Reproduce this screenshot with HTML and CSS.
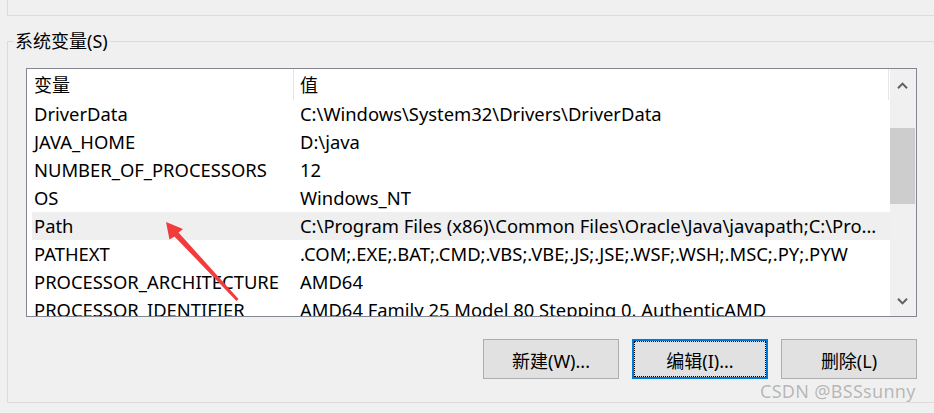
FILE: index.html
```html
<!DOCTYPE html>
<html lang="zh-CN">
<head>
<meta charset="utf-8">
<title>系统变量</title>
<link rel="stylesheet" href="styles.css">
</head>
<body>
  <div class="top-group"></div>
  <fieldset class="sys-group">
    <legend class="sys-legend">系统变量(S)</legend>
    <div class="sys-body">
      <div class="listbox">
        <div class="list-main">
          <div class="list-header">
            <div class="hcell hcell-name">变量</div>
            <div class="hcell hcell-value">值</div>
          </div>
          <div class="row"><div class="cell">DriverData</div><div class="cell cell-value">C:\Windows\System32\Drivers\DriverData</div></div>
          <div class="row"><div class="cell">JAVA_HOME</div><div class="cell cell-value">D:\java</div></div>
          <div class="row"><div class="cell">NUMBER_OF_PROCESSORS</div><div class="cell cell-value">12</div></div>
          <div class="row"><div class="cell">OS</div><div class="cell cell-value">Windows_NT</div></div>
          <div class="row row-hover"><div class="cell">Path</div><div class="cell cell-value">C:\Program Files (x86)\Common Files\Oracle\Java\javapath;C:\Pro...</div></div>
          <div class="row"><div class="cell">PATHEXT</div><div class="cell cell-value">.COM;.EXE;.BAT;.CMD;.VBS;.VBE;.JS;.JSE;.WSF;.WSH;.MSC;.PY;.PYW</div></div>
          <div class="row"><div class="cell">PROCESSOR_ARCHITECTURE</div><div class="cell cell-value">AMD64</div></div>
          <div class="row"><div class="cell">PROCESSOR_IDENTIFIER</div><div class="cell cell-value">AMD64 Family 25 Model 80 Stepping 0, AuthenticAMD</div></div>
        </div>
        <div class="scrollbar">
          <div class="sb-btn sb-up">
            <svg width="11" height="7" viewBox="0 0 11 7"><polyline points="1,6.2 5.5,1.6 10,6.2" fill="none" stroke="#606060" stroke-width="2"/></svg>
          </div>
          <div class="sb-track"><div class="sb-thumb"></div></div>
          <div class="sb-btn sb-down">
            <svg width="11" height="7" viewBox="0 0 11 7"><polyline points="1,0.8 5.5,5.4 10,0.8" fill="none" stroke="#606060" stroke-width="2"/></svg>
          </div>
        </div>
      </div>
      <div class="buttons">
        <button class="btn">新建(W)...</button>
        <button class="btn btn-focus">编辑(I)...</button>
        <button class="btn">删除(L)</button>
      </div>
    </div>
  </fieldset>
  <svg class="annot-arrow" width="934" height="413" viewBox="0 0 934 413">
    <polygon points="166,222 183,229 178.5,232.5 238.5,299 236.5,301 174.5,236.5 169.5,239.5" fill="#f23b3b"/>
  </svg>
  <div class="watermark">CSDN @BSSsunny</div>
</body>
</html>
```
FILE: styles.css
```css
html, body {
  margin: 0;
  padding: 0;
}
body {
  width: 934px;
  height: 413px;
  overflow: hidden;
  position: relative;
  background: #f0f0f0;
  font-family: "Noto Sans", "Noto Sans CJK SC", sans-serif;
  font-size: 18px;
  color: #000;
}
.top-group {
  height: 15px;
  margin-left: 7px;
  border-left: 1px solid #dcdcdc;
  border-bottom: 1px solid #dcdcdc;
}
.sys-group {
  margin: 15px -20px 0 7px;
  padding: 0 0 23px 0;
  border: 1px solid #dcdcdc;
  border-right: none;
  min-width: 0;
}
.sys-legend {
  margin-left: 5px;
  padding: 0 2px;
  height: 20px;
  line-height: 20px;
  font-family: "Noto Sans", "Noto Sans CJK SC", sans-serif;
  font-size: 18px;
}
.sys-body {
  padding: 17px 0 0 18px;
  width: 891px;
}
.listbox {
  display: flex;
  width: 891px;
  height: 249px;
  box-sizing: border-box;
  border: 1px solid #828790;
  background: #fff;
  overflow: hidden;
}
.list-main {
  flex: 1;
  min-width: 0;
  overflow: hidden;
}
.list-header {
  display: flex;
  height: 31px;
  align-items: stretch;
}
.hcell {
  box-sizing: border-box;
  line-height: 31px;
  padding-top: 1px;
}
.hcell-name {
  width: 267px;
  padding-left: 7px;
  border-right: 1px solid #e5e5e5;
}
.hcell-value {
  width: 595px;
  padding-left: 6px;
  border-right: 1px solid #e5e5e5;
}
.row {
  display: grid;
  grid-template-columns: 262px 1fr;
  margin-left: 5px;
  height: 28px;
  line-height: 28px;
  font-size: 18.4px;
}
.row-hover {
  background: #efefef;
}
.cell {
  padding-left: 2px;
  white-space: nowrap;
  overflow: hidden;
}
.cell-value {
  padding-left: 6px;
}
.scrollbar {
  width: 26px;
  flex: none;
  display: flex;
  flex-direction: column;
  background: #f0f0f0;
}
.sb-btn {
  display: flex;
  align-items: center;
  justify-content: center;
  padding-right: 1px;
}
.sb-up {
  height: 32px;
}
.sb-down {
  height: 30px;
}
.sb-track {
  flex: 1;
  padding-top: 27px;
}
.sb-thumb {
  height: 76px;
  margin-right: 1px;
  background: #cdcdcd;
}
.buttons {
  display: flex;
  justify-content: flex-end;
  gap: 13px;
  margin-top: 22px;
}
.btn {
  width: 136px;
  height: 40px;
  box-sizing: border-box;
  margin: 0;
  padding: 2px 0 0 0;
  background: #e1e1e1;
  border: 1px solid #adadad;
  border-radius: 0;
  font-family: "Noto Sans", "Noto Sans CJK SC", sans-serif;
  font-size: 18px;
  color: #000;
}
.btn-focus {
  border: 2px solid #0078d7;
  outline: 1px dotted #000;
  outline-offset: -3px;
}
.annot-arrow {
  position: absolute;
  left: 0;
  top: 0;
  pointer-events: none;
}
.watermark {
  position: absolute;
  left: 760px;
  top: 381px;
  line-height: 20px;
  font-size: 18px;
  letter-spacing: 0.3px;
  color: #b6b6b6;
  text-shadow: 0 0 1px #ffffff;
  white-space: nowrap;
}
```
